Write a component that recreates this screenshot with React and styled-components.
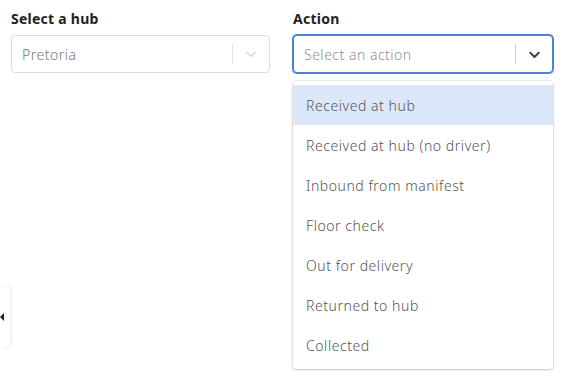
import styled, { createGlobalStyle } from "styled-components"

const GlobalStyle = createGlobalStyle`
  html, body {
    margin: 0;
    padding: 0;
    background: #ffffff;
  }
  body {
    font-family: "Noto Sans", "Open Sans", sans-serif;
  }
`;

const Page = styled.div`
  width: 563px;
  height: 371px;
  overflow: hidden;
  position: relative;
  display: grid;
  grid-template-columns: 259px 260px;
  column-gap: 23px;
  padding: 9px 0 0 11px;
  box-sizing: border-box;
`;

const Field = styled.div`
  display: flex;
  flex-direction: column;
  position: relative;
`;

const Label = styled.div`
  font-size: 14px;
  font-weight: 700;
  letter-spacing: 0.25px;
  color: #222;
  height: 26px;
  line-height: 20px;
`;

const Control = styled.div`
  height: 38px;
  box-sizing: border-box;
  border-radius: 4px;
  border: 1px solid ${p => (p.$focused ? "#4a82da" : "#dcdcdc")};
  box-shadow: ${p => (p.$focused ? "0 0 0 1px #4a82da" : "none")};
  display: flex;
  align-items: center;
  background: #fff;
`;

const Value = styled.div`
  flex: 1;
  padding-left: 10px;
  font-size: 14px;
  font-weight: 300;
  letter-spacing: 0.5px;
  color: ${p => (p.$muted ? "#8f8f8f" : "#777")};
`;

const Separator = styled.span`
  width: 1px;
  align-self: stretch;
  margin: 8px 0;
  background: ${p => (p.$strong ? "#d0d0d0" : "#e6e6e6")};
`;

const Indicator = styled.div`
  width: 36px;
  display: flex;
  justify-content: center;
  align-items: center;
  color: ${p => (p.$dark ? "#444" : "#ccc")};
`;

const Menu = styled.div`
  position: absolute;
  top: 72px;
  left: 0;
  right: 0;
  background: #fff;
  border-radius: 4px;
  box-shadow: 0 0 0 1px rgba(0, 0, 0, 0.08), 0 2px 4px rgba(0, 0, 0, 0.12);
  padding: 4px 0;
`;

const Option = styled.div`
  height: 40px;
  display: flex;
  align-items: center;
  padding-left: 13px;
  font-size: 14px;
  font-weight: 300;
  letter-spacing: 0.55px;
  color: #555;
  background: ${p => (p.$active ? "#dce8fa" : "transparent")};
`;

const SideTab = styled.div`
  position: absolute;
  left: 0;
  top: 287px;
  width: 10px;
  height: 60px;
  background: #fff;
  border-radius: 0 4px 4px 0;
  box-shadow: 1px 0 4px rgba(0, 0, 0, 0.1);
  display: flex;
  align-items: center;
`;

const Arrow = styled.span`
  width: 0;
  height: 0;
  border-top: 4px solid transparent;
  border-bottom: 4px solid transparent;
  border-right: 4px solid #222;
`;

const Chevron = ({ size = 16, stroke = 2 }) => (
  <svg width={size} height={size} viewBox="0 0 20 20" fill="none">
    <path d="M5 8l5 5 5-5" stroke="currentColor" strokeWidth={stroke} strokeLinecap="round" strokeLinejoin="round" />
  </svg>
);

const actions = [
  "Received at hub",
  "Received at hub (no driver)",
  "Inbound from manifest",
  "Floor check",
  "Out for delivery",
  "Returned to hub",
  "Collected",
];

const App = () => {
  return (
    <>
      <GlobalStyle />
      <Page>
        <Field>
          <Label>Select a hub</Label>
          <Control>
            <Value>Pretoria</Value>
            <Separator />
            <Indicator>
              <Chevron size={16} stroke={1.5} />
            </Indicator>
          </Control>
        </Field>
        <Field>
          <Label>Action</Label>
          <Control $focused>
            <Value $muted>Select an action</Value>
            <Separator $strong />
            <Indicator $dark>
              <Chevron size={17} stroke={2.4} />
            </Indicator>
          </Control>
          <Menu>
            {actions.map((a, i) => (
              <Option key={a} $active={i === 0}>{a}</Option>
            ))}
          </Menu>
        </Field>
        <SideTab>
          <Arrow />
        </SideTab>
      </Page>
    </>
  )
}

export default App
